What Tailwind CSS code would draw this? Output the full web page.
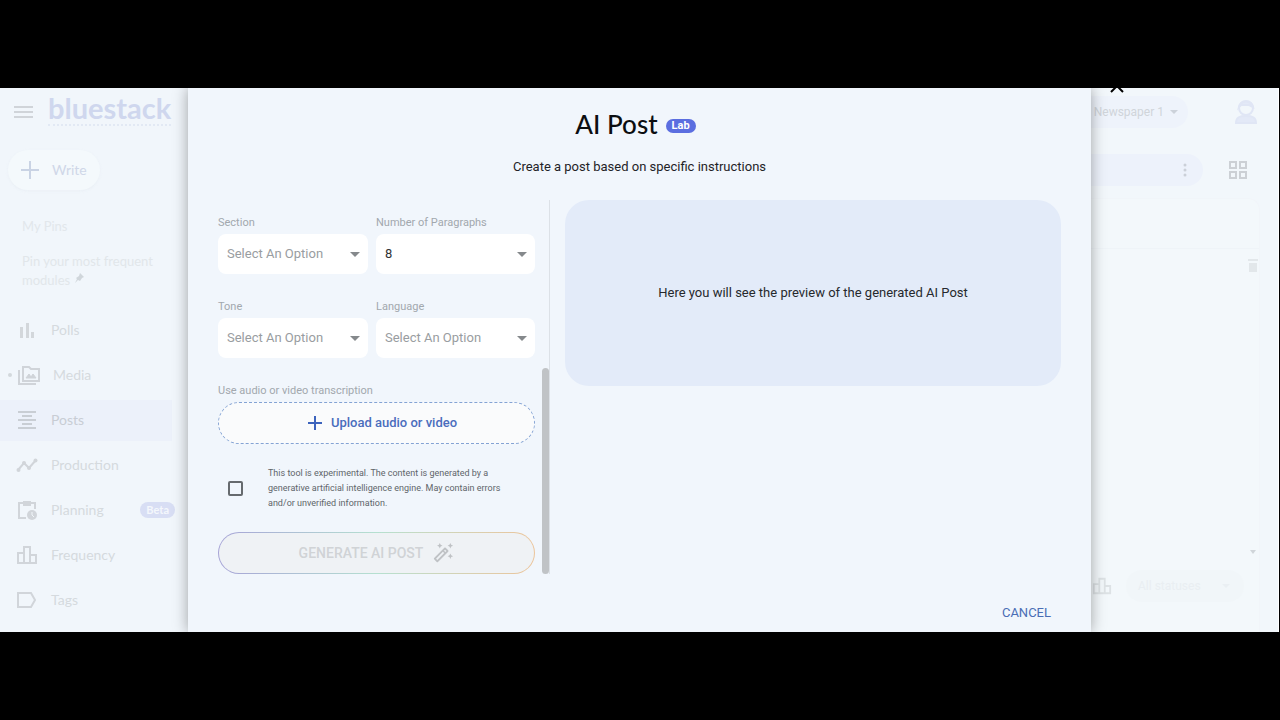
<!DOCTYPE html>
<html lang="en">
<head>
    <meta charset="UTF-8">
    <meta name="viewport" content="width=device-width, initial-scale=1.0">
    <title>AI Post</title>
    <script src="https://cdn.jsdelivr.net/npm/@tailwindcss/browser@4"></script>
</head>
<body class="bg-black min-h-screen flex flex-col py-[88px] pr-px font-['Roboto',sans-serif]">

    <div class="relative flex-1 flex overflow-hidden bg-[#f1f6fb] border-r border-white">

        <!-- Sidebar -->
        <aside class="w-[172px] shrink-0 font-['Lato',sans-serif] text-[#d5dade]">
            <header class="h-12 flex items-center gap-3 pl-3">
                <button aria-label="Menu">
                    <svg class="w-6 h-6" viewBox="0 0 24 24" fill="none" stroke="#d0d4d9" stroke-width="2"><path d="M2 7h19M2 12h19M2 17h19"/></svg>
                </button>
                <a href="#" class="flex flex-col pb-1 text-[#cfd7ee]">
                    <span class="text-[29px] leading-8 font-bold">bluestack</span>
                    <span class="h-1 border-t-2 border-dotted border-[#e2e9f4]"></span>
                </a>
            </header>
            <button class="mt-[14px] ml-2 h-10 w-[92px] rounded-full bg-[#f4f9fc] shadow-sm shadow-slate-200/30 flex items-center gap-3 pl-3 text-sm text-[#cfd7e8]">
                <svg class="w-5 h-5" viewBox="0 0 20 20" fill="none" stroke="#c9d3e4" stroke-width="2"><path d="M10 1v18M1 10h18"/></svg>
                Write
            </button>
            <h2 class="mt-7 pl-[22px] h-4 text-[13px] leading-4 text-[#e2e7eb]">My Pins</h2>
            <p class="mt-[18px] pl-[22px] text-[13px] leading-[19px] text-[#e1e6ea]">Pin your most frequent modules
                <svg class="inline w-3 h-3 mb-2" viewBox="0 0 12 12" fill="#d0d6db"><path d="M7 1l4 4-2 1-2 3-2-1-3 3 2-4-1-1 3-2z"/></svg>
            </p>
            <nav class="mt-4 text-sm">
                <a href="#" class="h-[45px] flex items-center gap-[13px] pl-4">
                    <svg class="w-[22px] h-[22px]" viewBox="0 0 22 22" fill="#d3d7db"><path d="M4 8h3v11H4zM10 4h3v15h-3zM15 13h3v6h-3z"/></svg>
                    Polls
                </a>
                <a href="#" class="relative h-[45px] flex items-center gap-3 pl-[17px]">
                    <span class="absolute left-2 w-1 h-1 rounded-full bg-[#d3d8dc]"></span>
                    <svg class="w-6 h-6" viewBox="0 0 24 24" fill="none" stroke="#d0d4d9" stroke-width="2"><path d="M6 4h6l2 2h8v12H6zM2 7v14h17"/><path d="M9 15l3-4 2 3 2-3 3 4z" fill="#d0d4d9" stroke-width="1"/></svg>
                    Media
                </a>
                <a href="#" class="h-[45px] flex items-center gap-[13px] pl-4 bg-[#ecf1fa] bg-clip-padding border-y-2 border-transparent text-[#c8cdd4]">
                    <svg class="w-[22px] h-[22px]" viewBox="0 0 22 22" fill="none" stroke="#c9ced4" stroke-width="2"><path d="M2 3h18M6 7h10M2 11h18M6 15h10M2 19h18"/></svg>
                    Posts
                </a>
                <a href="#" class="h-[45px] flex items-center gap-[13px] pl-4">
                    <svg class="w-[22px] h-[22px]" viewBox="0 0 22 22" fill="none" stroke="#d1d5da" stroke-width="2"><path d="M2 16l6-7 5 5 7-8"/><g fill="#d1d5da" stroke="none"><circle cx="2.500" cy="16" r="2"/><circle cx="8" cy="9" r="2"/><circle cx="13" cy="14" r="2"/><circle cx="19.500" cy="6.500" r="2"/></g></svg>
                    Production
                </a>
                <a href="#" class="h-[45px] flex items-center gap-[13px] pl-4">
                    <svg class="w-[22px] h-[22px]" viewBox="0 0 22 22" fill="none" stroke="#d1d5da" stroke-width="2"><path d="M19 10V4H3v15h7"/><path d="M7 2h8v5H7z" fill="#d1d5da" stroke="none"/><circle cx="16" cy="16" r="5" fill="#d1d5da" stroke="none"/><path d="M16 13v3l2 2" stroke="#f1f6fa" stroke-width="1"/></svg>
                    Planning
                    <span class="ml-auto -mr-[3px] h-4 px-[6px] rounded-full bg-[#d8def4] text-[#f4f7fc] text-[11px] leading-4 font-bold">Beta</span>
                </a>
                <a href="#" class="h-[45px] flex items-center gap-[13px] pl-4">
                    <svg class="w-[22px] h-[22px]" viewBox="0 0 22 22" fill="none" stroke="#d1d5da" stroke-width="2"><path d="M2 19V9h6v10M8 19V3h6v16M14 11h6v8M1 19h20"/></svg>
                    Frequency
                </a>
                <a href="#" class="h-[45px] flex items-center gap-[13px] pl-4">
                    <svg class="w-[22px] h-[22px]" viewBox="0 0 22 22" fill="none" stroke="#d1d5da" stroke-width="2"><path d="M2 4h13l4 7-4 7H2z"/></svg>
                    Tags
                </a>
            </nav>
        </aside>

        <!-- Page content behind the dialog -->
        <main class="flex-1 flex flex-col ml-4 pt-2 pr-[18px] bg-[#f2f7fb]">
            <div class="flex items-center justify-end gap-[44px]">
                <button class="h-8 w-[140px] rounded-full bg-[#eef3fb] flex items-center justify-end gap-1 pr-2 text-xs text-[#d0d5da]">
                    AC Newspaper 1
                    <svg class="w-3 h-3" viewBox="0 0 12 12" fill="#ccd2da"><path d="M2 4h8L6 8z"/></svg>
                </button>
                <button aria-label="Account">
                    <svg class="w-7 h-7" viewBox="0 0 28 28" fill="none" stroke="#e0e6f5" stroke-width="2"><circle cx="14" cy="10" r="7"/><path d="M7 9c2-7 12-7 14 0l-4-2H9zM4 25c0-6 4-7 10-7s10 1 10 7z" fill="#e3e9f7"/></svg>
                </button>
            </div>
            <div class="mt-[26px] flex items-center justify-end gap-[23px] pr-[10px]">
                <div class="h-8 flex-1 rounded-r-full bg-[#edf2fb] flex items-center justify-end pr-2">
                    <svg class="w-5 h-5" viewBox="0 0 20 20" fill="#cbd0d8"><circle cx="10" cy="5" r="1.500"/><circle cx="10" cy="10" r="1.500"/><circle cx="10" cy="15" r="1.500"/></svg>
                </div>
                <button aria-label="Grid view">
                    <svg class="w-6 h-6" viewBox="0 0 24 24" fill="none" stroke="#ccd0d5" stroke-width="2"><path d="M4 4h6v6H4zM14 4h6v6h-6zM4 14h6v6H4zM14 14h6v6h-6z"/></svg>
                </button>
            </div>
            <section class="mt-3 flex-1 flex flex-col bg-[#f3f8fb] rounded-t-xl border border-b-0 border-[#f1f5f9]">
                <div class="h-[50px] border-b border-[#eff4f8]"></div>
                <div class="flex-1 flex flex-col items-end justify-between pt-2">
                    <svg class="w-3 h-4" viewBox="0 0 12 16" fill="#e2e7ea"><path d="M1 2h10v2H1zM2 6h8v9H2z"/></svg>
                    <svg class="w-3 h-2" viewBox="0 0 12 8" fill="#d0d5d9"><path d="M3 2h6L6 6z"/></svg>
                </div>
                <div class="h-[76px] flex items-center gap-[14px] justify-end pb-4 pr-[15px]">
                    <svg class="w-5 h-5" viewBox="0 0 22 22" fill="none" stroke="#dde2e5" stroke-width="2"><path d="M2 19V9h6v10M8 19V3h6v16M14 11h6v8M1 19h20"/></svg>
                    <button class="h-8 w-[118px] rounded-full bg-[#f1f6f9] flex items-center justify-between px-3 text-xs text-[#e9eef2]">
                        All statuses
                        <svg class="w-3 h-3" viewBox="0 0 12 12" fill="#eaeff3"><path d="M2 4h8L6 8z"/></svg>
                    </button>
                </div>
            </section>
        </main>

        <!-- AI Post dialog -->
        <div role="dialog" aria-labelledby="dialog-title" class="absolute inset-y-0 left-[188px] right-[187px] flex flex-col px-[30px] pt-5 pb-[9px] bg-[#f1f6fc] shadow-[0_0_14px_rgba(0,0,0,0.35)]">
            <div class="h-8 flex items-center justify-center gap-2 pr-2">
                <h1 id="dialog-title" class="text-[26px] leading-8 font-medium text-[#0c0e11] font-['Lato',sans-serif]">AI Post</h1>
                <span class="mt-1 h-[14px] px-[6px] rounded-full bg-[#5b6ee0] text-white text-[11px] leading-[14px] font-bold">Lab</span>
            </div>
            <p class="mt-[17px] text-center text-[13px] leading-5 text-[#1f2327]">Create a post based on specific instructions</p>

            <div class="mt-[23px] flex items-start gap-[15px]">
                <form class="relative w-[332px] shrink-0 pr-[14px] pt-[14px] border-r border-[#dce1e7] text-[#a2a8ae]">
                    <div class="grid grid-cols-[150px_1fr] gap-x-2 gap-y-6">
                        <div class="flex flex-col gap-[2px]">
                            <label for="section" class="text-[11px] leading-[18px]">Section</label>
                            <div class="relative">
                                <select id="section" class="appearance-none w-full h-10 rounded-lg bg-white px-[9px] text-[13px] text-[#999da1]"><option>Select An Option</option></select>
                                <svg class="absolute right-2 top-[15px] w-[10px] h-[10px] pointer-events-none" viewBox="0 0 10 10" fill="#85898c"><path d="M0 3h10L5 8z"/></svg>
                            </div>
                        </div>
                        <div class="flex flex-col gap-[2px]">
                            <label for="paragraphs" class="text-[11px] leading-[18px]">Number of Paragraphs</label>
                            <div class="relative">
                                <select id="paragraphs" class="appearance-none w-full h-10 rounded-lg bg-white px-[9px] text-[13px] text-[#303234]"><option>8</option></select>
                                <svg class="absolute right-2 top-[15px] w-[10px] h-[10px] pointer-events-none" viewBox="0 0 10 10" fill="#85898c"><path d="M0 3h10L5 8z"/></svg>
                            </div>
                        </div>
                        <div class="flex flex-col gap-[2px]">
                            <label for="tone" class="text-[11px] leading-[18px]">Tone</label>
                            <div class="relative">
                                <select id="tone" class="appearance-none w-full h-10 rounded-lg bg-white px-[9px] text-[13px] text-[#999da1]"><option>Select An Option</option></select>
                                <svg class="absolute right-2 top-[15px] w-[10px] h-[10px] pointer-events-none" viewBox="0 0 10 10" fill="#85898c"><path d="M0 3h10L5 8z"/></svg>
                            </div>
                        </div>
                        <div class="flex flex-col gap-[2px]">
                            <label for="language" class="text-[11px] leading-[18px]">Language</label>
                            <div class="relative">
                                <select id="language" class="appearance-none w-full h-10 rounded-lg bg-white px-[9px] text-[13px] text-[#999da1]"><option>Select An Option</option></select>
                                <svg class="absolute right-2 top-[15px] w-[10px] h-[10px] pointer-events-none" viewBox="0 0 10 10" fill="#85898c"><path d="M0 3h10L5 8z"/></svg>
                            </div>
                        </div>
                        <div class="col-span-2 flex flex-col gap-[2px]">
                            <span id="upload-label" class="text-[11px] leading-[18px]">Use audio or video transcription</span>
                            <button type="button" aria-describedby="upload-label" class="h-[42px] rounded-full border border-dashed border-[#84a3d4] bg-[#fafbfc] flex items-center justify-center gap-[9px] pl-3 text-[13px] font-medium text-[#4a6dbd]">
                                <svg class="w-[14px] h-[14px]" viewBox="0 0 14 14" fill="none" stroke="#3c63bd" stroke-width="2"><path d="M7 0v14M0 7h14"/></svg>
                                Upload audio or video
                            </button>
                        </div>
                    </div>
                    <div class="mt-[22px] flex items-center gap-[25px] pl-[10px] pr-5">
                        <input id="accept" type="checkbox" class="appearance-none w-[15px] h-[15px] shrink-0 border-2 border-[#666a6e] rounded-xs">
                        <label for="accept" class="text-[9px] leading-[15px] text-[#60656a]">This tool is experimental. The content is generated by a generative artificial intelligence engine. May contain errors and/or unverified information.</label>
                    </div>
                    <div class="mt-[21px] rounded-full p-px bg-linear-to-r from-[#a6a3d6] via-[#b5e0d0] to-[#ecc49a]">
                        <button type="submit" disabled class="w-full h-10 rounded-full bg-[#eff2f5] flex items-center justify-center gap-[9px] text-sm font-medium text-[#d0d3d6]">
                            GENERATE AI POST
                            <svg class="w-[22px] h-[22px]" viewBox="0 0 24 24" fill="#bfc2c5"><path d="M20 7l.94-2.060L23 4l-2.060-.94L20 1l-.94 2.060L17 4l2.060.94zM8.500 7l.94-2.060L11.500 4l-2.060-.94L8.500 1l-.94 2.060L5.500 4l2.060.94zM20 12.500l-.94 2.060-2.060.94 2.060.94.94 2.060.94-2.060L23 15.500l-2.060-.94zM17.710 9.120l-2.830-2.830c-.39-.39-1.020-.39-1.410 0L2.290 17.460c-.39.39-.39 1.020 0 1.410l2.830 2.830c.39.39 1.020.39 1.410 0L17.700 10.530c.4-.38.4-1.020.010-1.410zm-3.500-.7l1.410 1.410-1.080 1.080-1.410-1.410zM5.830 19.590l-1.410-1.410 7.460-7.460 1.410 1.410z"/></svg>
                        </button>
                    </div>
                    <span class="absolute right-0 bottom-0 w-[7px] h-[206px] rounded-full bg-[#c0c3c6]"></span>
                </form>
                <div class="flex-1 h-[186px] rounded-3xl bg-[#e3ebf9] flex items-center justify-center text-[13px] text-[#26292d]">Here you will see the preview of the generated AI Post</div>
            </div>

            <div class="mt-auto flex justify-end pr-[10px]">
                <button class="h-5 text-[13px] leading-5 text-[#4a6db5]">CANCEL</button>
            </div>
        </div>

        <button aria-label="Close" class="absolute -top-[10px] right-[153px]">
            <svg class="w-4 h-4" viewBox="0 0 16 16" fill="none" stroke="#000" stroke-width="2"><path d="M2 2l12 12M14 2L2 14"/></svg>
        </button>
    </div>

</body>
</html>
